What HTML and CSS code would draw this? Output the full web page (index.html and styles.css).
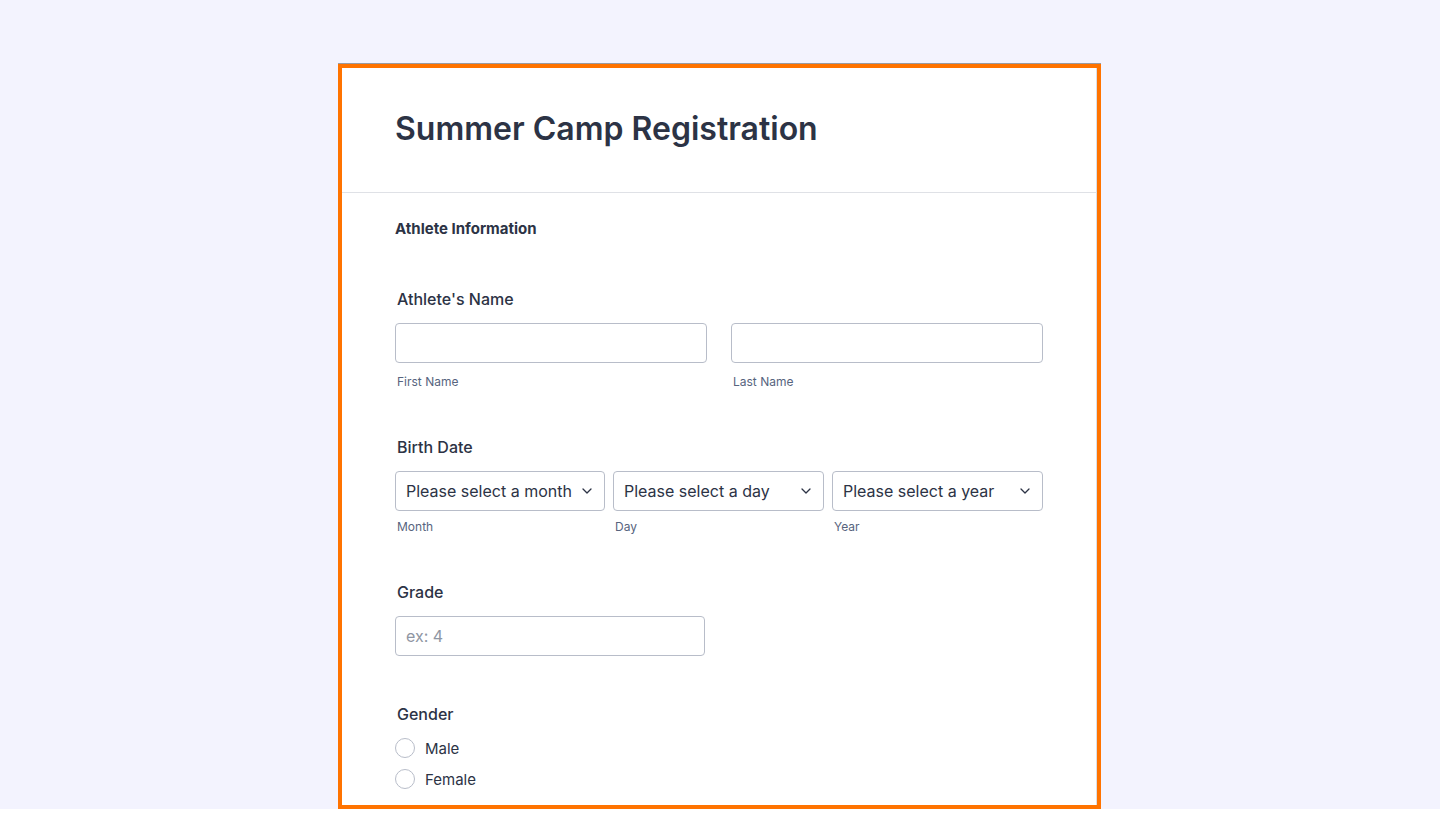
FILE: index.html
```html
<!DOCTYPE html>
<html lang="en">
<head>
<meta charset="utf-8">
<title>Summer Camp Registration</title>
<link rel="stylesheet" href="styles.css">
</head>
<body>
<div class="page">
  <form class="card">
    <header class="card-header">
      <h1 class="title">Summer Camp Registration</h1>
    </header>
    <section class="section">
      <h2 class="section-title">Athlete Information</h2>

      <div class="field field-first">
        <div class="label">Athlete's Name</div>
        <div class="row two">
          <div class="col">
            <input class="input" type="text">
            <div class="sublabel">First Name</div>
          </div>
          <div class="col">
            <input class="input" type="text">
            <div class="sublabel">Last Name</div>
          </div>
        </div>
      </div>

      <div class="field field-date">
        <div class="label">Birth Date</div>
        <div class="row three">
          <div class="col">
            <div class="select"><span>Please select a month</span><svg class="chev" viewBox="0 0 10 6"><path d="M1 1l4 4 4-4"/></svg></div>
            <div class="sublabel tight">Month</div>
          </div>
          <div class="col">
            <div class="select"><span>Please select a day</span><svg class="chev" viewBox="0 0 10 6"><path d="M1 1l4 4 4-4"/></svg></div>
            <div class="sublabel tight">Day</div>
          </div>
          <div class="col">
            <div class="select"><span>Please select a year</span><svg class="chev" viewBox="0 0 10 6"><path d="M1 1l4 4 4-4"/></svg></div>
            <div class="sublabel tight">Year</div>
          </div>
        </div>
      </div>

      <div class="field field-grade">
        <div class="label">Grade</div>
        <input class="input grade" type="text" placeholder="ex: 4">
      </div>

      <div class="field">
        <div class="label">Gender</div>
        <div class="radios">
          <label class="radio"><span class="circle"></span><span class="radio-text">Male</span></label>
          <label class="radio"><span class="circle"></span><span class="radio-text">Female</span></label>
        </div>
      </div>
    </section>
  </form>
</div>
</body>
</html>
```

FILE: styles.css
```css
html {
  background: #ffffff;
}
body {
  margin: 0;
  font-family: Inter, "Noto Sans", sans-serif;
  color: #2c3345;
}
.page {
  height: 809px;
  overflow: hidden;
  background: #f3f3fe;
  padding-top: 64px;
  padding-right: 1px;
  box-sizing: border-box;
}
.card {
  width: 763px;
  height: 745px;
  margin: 0 auto;
  box-sizing: border-box;
  background: #ffffff;
  border: 4px solid #ff7300;
  box-shadow: inset -1px 0 0 #dcdde3, 0 -1px 0 #9a9aa0;
  overflow: hidden;
}
.card-header {
  padding: 41px 53px 43px;
  border-bottom: 1px solid #dfe1e6;
}
.title {
  margin: 0;
  font-size: 32px;
  line-height: 40px;
  font-weight: 600;
  color: #2c3345;
}
.section {
  padding: 26px 53px 0;
}
.section-title {
  margin: 0;
  font-size: 15px;
  line-height: 20px;
  font-weight: 700;
  color: #2c3345;
}
.field {
  margin-top: 48px;
}
.field-first {
  margin-top: 50px;
}
.field-date {
  margin-top: 47px;
}
.field-grade {
  margin-top: 47px;
}
.label {
  font-size: 16px;
  line-height: 20px;
  font-weight: 500;
  padding-left: 2px;
  margin-bottom: 14px;
  color: #2c3345;
}
.row {
  display: flex;
}
.row.two {
  gap: 24px;
}
.row.three {
  gap: 8px;
}
.row.two .col {
  width: 312px;
}
.row.three .col {
  width: 210px;
}
.row.three .col + .col {
  width: 211px;
}
.input {
  display: block;
  width: 100%;
  height: 40px;
  box-sizing: border-box;
  border: 1px solid #b8bdc9;
  border-radius: 4px;
  padding: 0 10px;
  font-family: Inter, "Noto Sans", sans-serif;
  font-size: 16px;
  color: #2c3345;
  background: #fff;
  margin: 0;
}
.input::placeholder {
  color: #8f96a3;
}
.input.grade {
  width: 310px;
}
.sublabel {
  margin-top: 11px;
  font-size: 12px;
  line-height: 16px;
  color: #57647e;
  padding-left: 2px;
}
.sublabel.tight {
  margin-top: 8px;
}
.select {
  display: flex;
  align-items: center;
  justify-content: space-between;
  height: 40px;
  box-sizing: border-box;
  border: 1px solid #b8bdc9;
  border-radius: 4px;
  padding: 0 12px 0 10px;
  font-size: 16px;
  color: #2c3345;
  background: #fff;
}
.chev {
  width: 10px;
  height: 6px;
  fill: none;
  stroke: #2c3345;
  stroke-width: 1.3;
  stroke-linecap: round;
  stroke-linejoin: round;
}
.radios {
  display: flex;
  flex-direction: column;
  gap: 11px;
}
.radio {
  display: flex;
  align-items: center;
  height: 20px;
  font-size: 15px;
  color: #2c3345;
}
.circle {
  width: 20px;
  height: 20px;
  box-sizing: border-box;
  border: 1px solid #b8bdc9;
  border-radius: 50%;
  margin-right: 10px;
  background: #fff;
}
```
